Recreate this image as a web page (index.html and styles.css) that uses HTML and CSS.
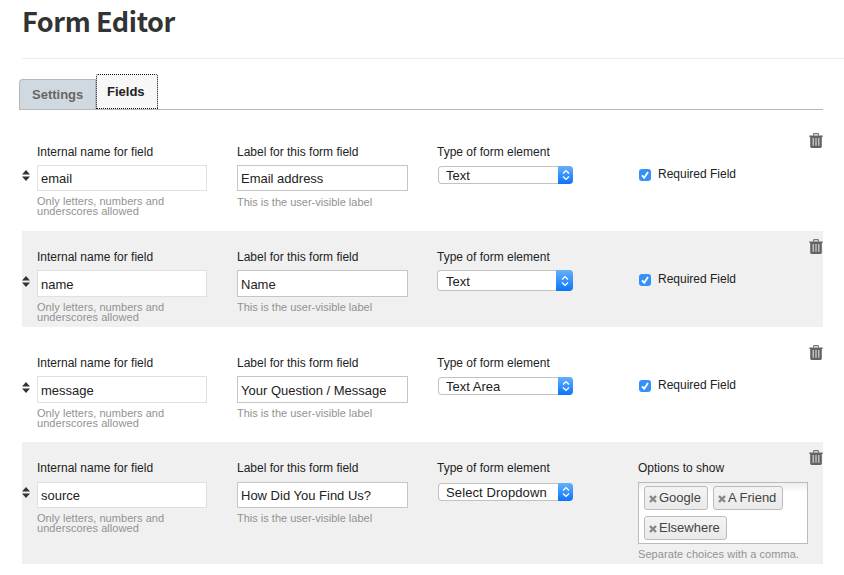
FILE: index.html
```
<!DOCTYPE html>
<html lang="en">
<head>
<meta charset="utf-8">
<title>Form Editor</title>
<link rel="stylesheet" href="styles.css">
</head>
<body>
<svg width="0" height="0" class="defs" aria-hidden="true">
  <symbol id="trash" viewBox="0 0 14 16">
    <path d="M4.6 2.6V1.2Q4.6.7 5.2.7H8.8Q9.4.7 9.4 1.2V2.6" fill="none" stroke="#777" stroke-width="1.2"/>
    <path d="M.4 2.5H13.6V4H.4Z" fill="#636363"/>
    <path d="M1.2 4H12.8V13.6Q12.8 15 11.4 15H2.6Q1.2 15 1.2 13.6Z" fill="#636363"/>
    <path d="M4.2 5V12.8M7 5V12.8M9.8 5V12.8" stroke="#dedede" stroke-width="1.1"/>
  </symbol>
  <symbol id="sort" viewBox="0 0 8 11"><path d="M4 0L8 4.5H0ZM0 6.5H8L4 11Z" fill="#333"/></symbol>
  <symbol id="chev" viewBox="0 0 8 12"><path d="M1 4.5L4 1.6L7 4.5M1 7.5L4 10.4L7 7.5" fill="none" stroke="#fff" stroke-width="1.4"/></symbol>
  <symbol id="check" viewBox="0 0 12 12"><path d="M3 6.3L5.2 8.7L9 3" fill="none" stroke="#fff" stroke-width="1.8"/></symbol>
  <symbol id="cross" viewBox="0 0 8 8"><path d="M1 1L7 7M7 1L1 7" fill="none" stroke="#858585" stroke-width="2.3"/></symbol>
</svg>
<h1>Form Editor</h1>
<nav class="tabs"><a class="tab">Settings</a><a class="tab active">Fields</a></nav>
<main>
  <section class="row first">
    <svg class="sort"><use href="#sort"/></svg>
    <div class="col internal"><label>Internal name for field</label><div class="input">email</div><p>Only letters, numbers and<br>underscores allowed</p></div>
    <div class="col label"><label>Label for this form field</label><div class="input">Email address</div><p>This is the user-visible label</p></div>
    <div class="col type"><label>Type of form element</label><div class="select"><span>Text</span><i><svg><use href="#chev"/></svg></i></div></div>
    <div class="col required"><b class="box"><svg><use href="#check"/></svg></b><span>Required Field</span></div>
    <svg class="trash"><use href="#trash"/></svg>
  </section>
  <section class="row shaded second">
    <svg class="sort"><use href="#sort"/></svg>
    <div class="col internal"><label>Internal name for field</label><div class="input">name</div><p>Only letters, numbers and<br>underscores allowed</p></div>
    <div class="col label"><label>Label for this form field</label><div class="input">Name</div><p>This is the user-visible label</p></div>
    <div class="col type"><label>Type of form element</label><div class="select tall"><span>Text</span><i><svg><use href="#chev"/></svg></i></div></div>
    <div class="col required"><b class="box"><svg><use href="#check"/></svg></b><span>Required Field</span></div>
    <svg class="trash"><use href="#trash"/></svg>
  </section>
  <section class="row third">
    <svg class="sort"><use href="#sort"/></svg>
    <div class="col internal"><label>Internal name for field</label><div class="input">message</div><p>Only letters, numbers and<br>underscores allowed</p></div>
    <div class="col label"><label>Label for this form field</label><div class="input">Your Question / Message</div><p>This is the user-visible label</p></div>
    <div class="col type"><label>Type of form element</label><div class="select"><span>Text Area</span><i><svg><use href="#chev"/></svg></i></div></div>
    <div class="col required"><b class="box"><svg><use href="#check"/></svg></b><span>Required Field</span></div>
    <svg class="trash"><use href="#trash"/></svg>
  </section>
  <section class="row shaded last">
    <svg class="sort"><use href="#sort"/></svg>
    <div class="col internal"><label>Internal name for field</label><div class="input">source</div><p>Only letters, numbers and<br>underscores allowed</p></div>
    <div class="col label"><label>Label for this form field</label><div class="input">How Did You Find Us?</div><p>This is the user-visible label</p></div>
    <div class="col type"><label>Type of form element</label><div class="select"><span>Select Dropdown</span><i><svg><use href="#chev"/></svg></i></div></div>
    <div class="col options"><label>Options to show</label>
      <div class="tags"><span class="tag"><svg><use href="#cross"/></svg>Google</span><span class="tag"><svg><use href="#cross"/></svg>A Friend</span><span class="tag"><svg><use href="#cross"/></svg>Elsewhere</span></div>
      <p>Separate choices with a comma.</p></div>
    <svg class="trash"><use href="#trash"/></svg>
  </section>
</main>
</body>
</html>
```
FILE: styles.css
```
* { box-sizing: border-box; }
body {
  margin: 0;
  height: 575px;
  overflow: hidden;
  background: #fff;
  color: #222;
  font: 12px/16px "Liberation Sans", Arial, sans-serif;
}
svg { display: block; flex: none; }
.defs { position: absolute; }
h1 {
  margin: 0 0 0 22px;
  height: 59px;
  border-bottom: 1px solid #ececec;
  color: #333;
  font: bold 27px/41px "Noto Sans CJK SC", "Noto Sans", sans-serif;
  letter-spacing: -0.42px;
}
.tabs {
  display: flex;
  align-items: flex-end;
  width: 804px;
  height: 51px;
  margin-left: 19px;
  border-bottom: 1px solid #b5b9bc;
}
.tab {
  width: 77px;
  height: 30px;
  padding-left: 12px;
  border: 1px solid #b3b8bc;
  border-bottom: 0;
  border-radius: 4px 0 0 0;
  background: #d1d9e0;
  color: #666;
  font-size: 13px;
  font-weight: bold;
  line-height: 30px;
}
.tab.active {
  width: 62px;
  height: 35px;
  padding-left: 10px;
  border: 1px dotted #111;
  border-radius: 2px 2px 0 0;
  background: #f7f7f7;
  color: #222;
  line-height: 33px;
}
main { width: 801px; margin: 16px 0 0 22px; }
.row {
  display: grid;
  grid-template-columns: 15px 200px 200px 201px 171px 14px;
  height: 96px;
  margin-bottom: 9px;
}
.row.second { margin-bottom: 10px; }
.row.last { height: 122px; margin: 0; }
.shaded { background: #f0f0f0; }
.sort { width: 8px; height: 11px; margin-top: 45px; }
.first .sort { margin-top: 44px; }
.trash { width: 14px; height: 16px; margin-top: 8px; }
.first .trash { margin-top: 7px; }
.col { padding-top: 18px; }
label { display: block; height: 21px; }
.input {
  width: 171px;
  height: 27px;
  padding-left: 3px;
  border: 1px solid #c5c5c5;
  background: #fff;
  font-size: 13px;
  line-height: 27px;
}
.first .input { height: 26px; line-height: 26px; }
.last .input { height: 26px; margin-top: 22px; line-height: 26px; }
.last label { height: 22px; }
.last .input { margin-top: 0; }
.internal .input { width: 170px; border-color: #e0e0e0; }
p { margin: 3px 0 0; color: #929292; font-size: 11px; line-height: 15px; }
.first p { margin-top: 4px; }
.internal p { margin-top: 5px; line-height: 10px; letter-spacing: 0.05px; }
.select {
  display: flex;
  justify-content: space-between;
  width: 135px;
  height: 18px;
  margin: 1px 0 0 1px;
  padding-left: 7px;
  border: 1px solid #c2c2c2;
  border-right: 0;
  border-radius: 4px;
  background: #fff;
  font-size: 13px;
  line-height: 18px;
}
.select i {
  display: flex;
  align-items: center;
  justify-content: center;
  width: 15px;
  margin: -1px 0;
  border-radius: 0 4px 4px 0;
  background: linear-gradient(#65b0fb, #0b74fb);
}
.select svg { width: 8px; height: 12px; }
.last .select { letter-spacing: 0.12px; }
.select.tall { width: 136px; height: 21px; margin: 0; padding-left: 8px; line-height: 21px; }
.tall i { width: 17px; }
.required { display: flex; padding-top: 40px; }
.box { width: 12px; height: 12px; margin: 3px 7px 0 1px; border-radius: 3px; background: #3491f8; }
.box svg { width: 12px; height: 12px; }
.tags {
  display: flex;
  flex-wrap: wrap;
  align-content: flex-start;
  gap: 6px 5px;
  width: 170px;
  height: 62px;
  padding: 3px 5px;
  border: 1px solid #bbb;
  background: linear-gradient(#eee, #fff 10px);
}
.options p { margin-top: 3px; letter-spacing: 0.07px; }
.tag {
  display: flex;
  height: 24px;
  padding: 0 5px;
  border: 1px solid #bbb;
  border-radius: 3px;
  background: linear-gradient(#f3f3f3, #eaeaea);
  color: #444;
  font-size: 13px;
  line-height: 22px;
}
.tag svg { width: 8px; height: 8px; margin: 8px 2px 0 -1px; }
.tag { padding-right: 6px; }
```
